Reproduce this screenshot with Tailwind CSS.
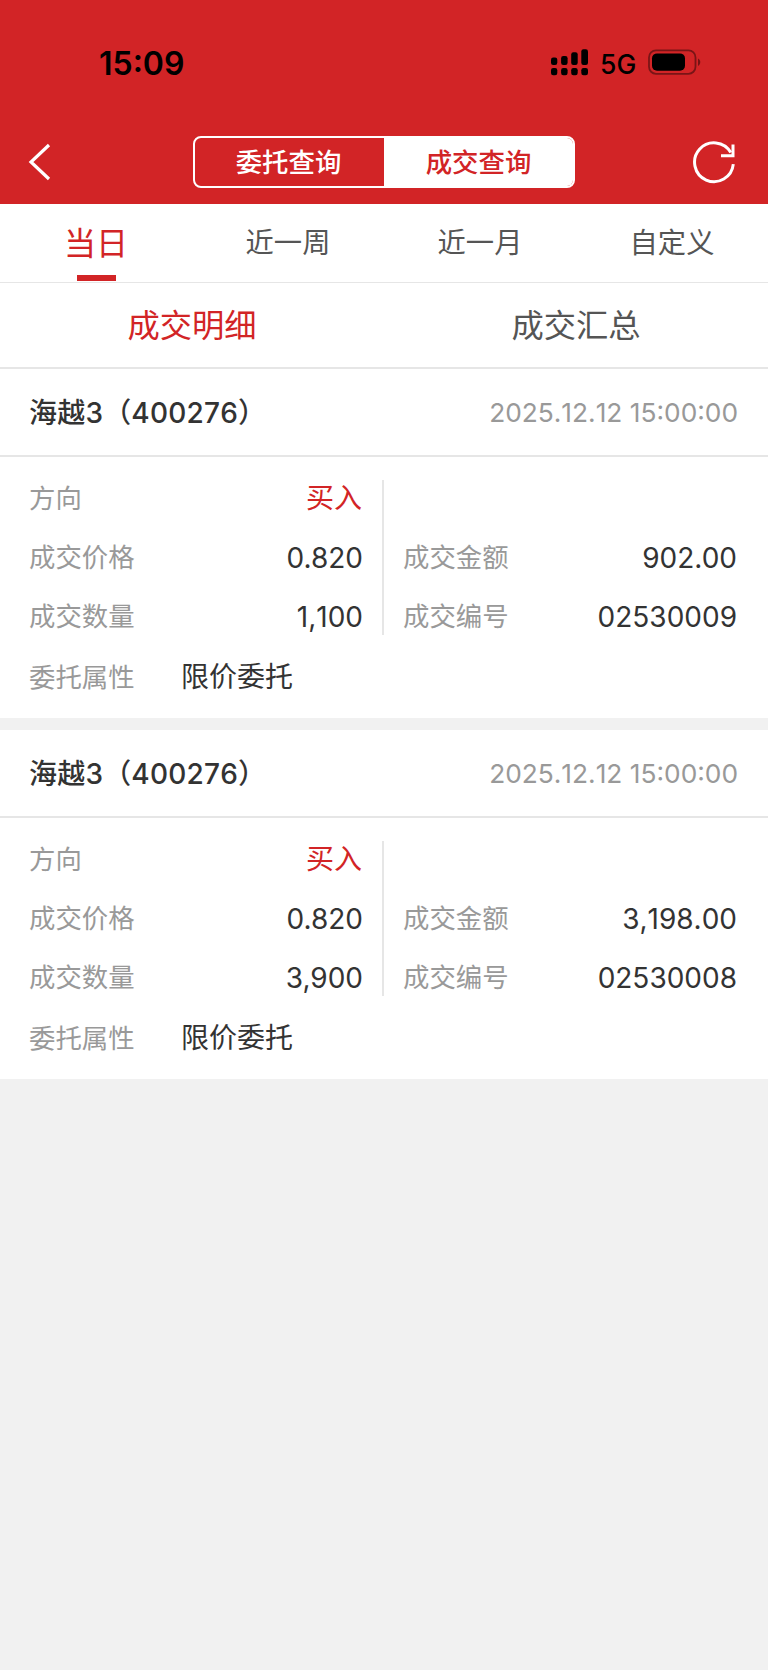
<!DOCTYPE html>
<html lang="zh-CN">
<head>
  <meta charset="UTF-8" />
  <meta name="viewport" content="width=device-width, initial-scale=1.0"/>
  <title>成交查询</title>
  <script src="https://cdn.jsdelivr.net/npm/@tailwindcss/browser@4"></script>
</head>
<body class="bg-[#f1f1f1] min-h-screen font-['Inter','Noto_Sans_CJK_SC',sans-serif] text-[#333] [font-kerning:none]">

  <header class="bg-[#d22426] h-[204px]">
    <!-- Status bar -->
    <div class="h-[124px] flex items-center justify-between pl-[99px] pr-[67px]">
      <span class="pt-[3px] text-[32px] font-semibold text-black leading-none">15:09</span>
      <div class="flex items-center">
        <svg class="w-[38px] h-[28px]" viewBox="0 0 38 28">
          <rect x="0" y="9.5" width="6.3" height="7.5" rx="2.2"/>
          <rect x="10.1" y="8" width="6.5" height="9" rx="2.2"/>
          <rect x="20.2" y="4.2" width="6.5" height="12.8" rx="2.2"/>
          <rect x="30.3" y="1.2" width="6.7" height="15.8" rx="2.2"/>
          <rect x="0" y="20" width="6.3" height="7.2" rx="2.2"/>
          <rect x="10.1" y="20" width="6.5" height="7.2" rx="2.2"/>
          <rect x="20.2" y="20" width="6.5" height="7.2" rx="2.2"/>
          <rect x="30.3" y="20" width="6.7" height="7.2" rx="2.2"/>
        </svg>
        <span class="ml-[11px] pt-[4px] w-[48px] text-[26.5px] font-medium text-black leading-none">5G</span>
        <svg class="w-[53px] h-[26px]" viewBox="0 0 53 26">
          <rect x="1" y="1.4" width="46.5" height="23.4" rx="7" fill="none" stroke="#000" stroke-opacity=".42" stroke-width="1.8"/>
          <rect x="4" y="4.4" width="33" height="17.4" rx="5"/>
          <path d="M50 9.6c3 1.6 3 5.8 0 7.4z" fill-opacity=".45"/>
        </svg>
      </div>
    </div>
    <!-- Nav -->
    <div class="h-[75px] grid grid-cols-[1fr_382px_1fr] items-center pl-[28px] pr-[28px]">
      <svg class="w-[24px] h-[38px]" viewBox="0 0 24 38" fill="none" stroke="#fff" stroke-width="3.2">
        <path d="M21 2L3 19L21 36" stroke-linejoin="miter"/>
      </svg>
      <div class="h-[52px] flex rounded-lg border-2 border-white overflow-hidden text-[26.4px] font-medium">
        <button class="w-[189px] pt-[3px] pr-[2px] text-white">委托查询</button>
        <button class="flex-1 pt-[3px] bg-white text-[#d22426]">成交查询</button>
      </div>
      <svg class="w-[44px] h-[44px] justify-self-end mr-[4px]" viewBox="0 0 44 44" fill="none" stroke="#fff" stroke-width="3">
        <path d="M41.3 24.2A19.4 19.4 0 1 1 38.8 12.6"/>
        <path d="M41 4.5V15.8H29"/>
      </svg>
    </div>
  </header>

  <!-- Date range -->
  <nav class="bg-white h-[79px] grid grid-cols-4 border-b border-[#e6e6e6] text-[28.3px] text-[#555] text-center leading-[78px]">
    <div class="relative h-[78px] leading-[80px] text-[32px] text-[#d22426]">当日
      <span class="absolute left-[77px] top-[71px] w-[38.5px] h-[6px] bg-[#d22426]"></span>
    </div>
    <div>近一周</div>
    <div>近一月</div>
    <div>自定义</div>
  </nav>

  <div class="bg-white h-[86px] grid grid-cols-2 border-b-2 border-[#e6e6e6] text-[32.3px] text-[#555] text-center leading-[86px]">
    <div class="text-[#d22426]">成交明细</div>
    <div>成交汇总</div>
  </div>

  <main class="space-y-3">
    <section class="bg-white h-[349px]">
      <div class="h-[88px] pt-[2px] flex items-center justify-between border-b-2 border-[#e6e6e6] pl-[29px] pr-[30px]">
        <h2 class="text-[28px] font-medium tracking-[0.2px]">海越3（400276）</h2>
        <time class="text-[26.3px] text-[#999]">2025.12.12 15:00:00</time>
      </div>
      <div class="pt-[12px] text-[28px] leading-[59px]">
        <div class="flex relative">
          <dl class="w-[384px] pl-[29px] pr-[21px]">
            <div class="flex justify-between"><dt class="text-[26.4px] text-[#999]">方向</dt><dd class="pr-px text-[#d22426]">买入</dd></div>
            <div class="flex justify-between"><dt class="text-[26.4px] text-[#999]">成交价格</dt><dd class="translate-y-px [font-kerning:normal]">0.820</dd></div>
            <div class="flex justify-between"><dt class="text-[26.4px] text-[#999]">成交数量</dt><dd class="translate-y-px">1,100</dd></div>
          </dl>
          <span class="absolute left-[382px] top-[11px] w-[2px] h-[155px] bg-[#e6e6e6]"></span>
          <dl class="flex-1 pt-[59px] pl-[19px] pr-[31px]">
            <div class="flex justify-between"><dt class="text-[26.4px] text-[#999]">成交金额</dt><dd class="translate-y-px [font-kerning:normal]">902.00</dd></div>
            <div class="flex justify-between"><dt class="text-[26.4px] text-[#999]">成交编号</dt><dd class="translate-y-px">02530009</dd></div>
          </dl>
        </div>
        <div class="flex pl-[29px] leading-[63px]">
          <span class="w-[152px] text-[26.4px] text-[#999]">委托属性</span>
          <span>限价委托</span>
        </div>
      </div>
    </section>

    <section class="bg-white h-[349px]">
      <div class="h-[88px] pt-[2px] flex items-center justify-between border-b-2 border-[#e6e6e6] pl-[29px] pr-[30px]">
        <h2 class="text-[28px] font-medium tracking-[0.2px]">海越3（400276）</h2>
        <time class="text-[26.3px] text-[#999]">2025.12.12 15:00:00</time>
      </div>
      <div class="pt-[12px] text-[28px] leading-[59px]">
        <div class="flex relative">
          <dl class="w-[384px] pl-[29px] pr-[21px]">
            <div class="flex justify-between"><dt class="text-[26.4px] text-[#999]">方向</dt><dd class="pr-px text-[#d22426]">买入</dd></div>
            <div class="flex justify-between"><dt class="text-[26.4px] text-[#999]">成交价格</dt><dd class="translate-y-px [font-kerning:normal]">0.820</dd></div>
            <div class="flex justify-between"><dt class="text-[26.4px] text-[#999]">成交数量</dt><dd class="translate-y-px [font-kerning:normal]">3,900</dd></div>
          </dl>
          <span class="absolute left-[382px] top-[11px] w-[2px] h-[155px] bg-[#e6e6e6]"></span>
          <dl class="flex-1 pt-[59px] pl-[19px] pr-[31px]">
            <div class="flex justify-between"><dt class="text-[26.4px] text-[#999]">成交金额</dt><dd class="translate-y-px">3,198.00</dd></div>
            <div class="flex justify-between"><dt class="text-[26.4px] text-[#999]">成交编号</dt><dd class="translate-y-px">02530008</dd></div>
          </dl>
        </div>
        <div class="flex pl-[29px] leading-[63px]">
          <span class="w-[152px] text-[26.4px] text-[#999]">委托属性</span>
          <span>限价委托</span>
        </div>
      </div>
    </section>
  </main>

</body>
</html>
